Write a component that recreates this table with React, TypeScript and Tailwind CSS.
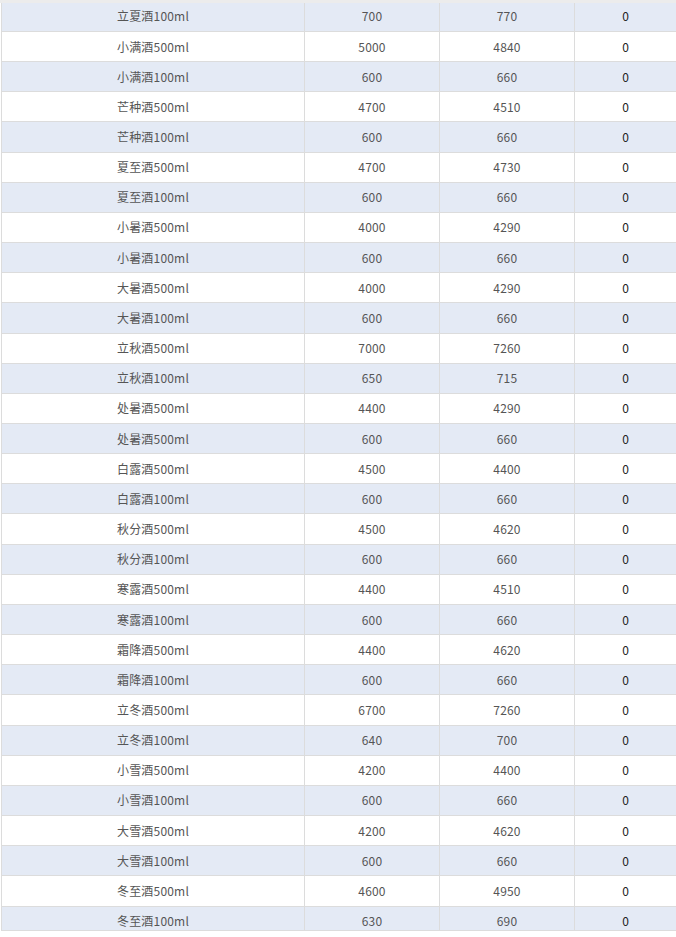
const rows: [string, number, number, number][] = [
  ['立夏酒100ml', 700, 770, 0],
  ['小满酒500ml', 5000, 4840, 0],
  ['小满酒100ml', 600, 660, 0],
  ['芒种酒500ml', 4700, 4510, 0],
  ['芒种酒100ml', 600, 660, 0],
  ['夏至酒500ml', 4700, 4730, 0],
  ['夏至酒100ml', 600, 660, 0],
  ['小暑酒500ml', 4000, 4290, 0],
  ['小暑酒100ml', 600, 660, 0],
  ['大暑酒500ml', 4000, 4290, 0],
  ['大暑酒100ml', 600, 660, 0],
  ['立秋酒500ml', 7000, 7260, 0],
  ['立秋酒100ml', 650, 715, 0],
  ['处暑酒500ml', 4400, 4290, 0],
  ['处暑酒500ml', 600, 660, 0],
  ['白露酒500ml', 4500, 4400, 0],
  ['白露酒100ml', 600, 660, 0],
  ['秋分酒500ml', 4500, 4620, 0],
  ['秋分酒100ml', 600, 660, 0],
  ['寒露酒500ml', 4400, 4510, 0],
  ['寒露酒100ml', 600, 660, 0],
  ['霜降酒500ml', 4400, 4620, 0],
  ['霜降酒100ml', 600, 660, 0],
  ['立冬酒500ml', 6700, 7260, 0],
  ['立冬酒100ml', 640, 700, 0],
  ['小雪酒500ml', 4200, 4400, 0],
  ['小雪酒100ml', 600, 660, 0],
  ['大雪酒500ml', 4200, 4620, 0],
  ['大雪酒100ml', 600, 660, 0],
  ['冬至酒500ml', 4600, 4950, 0],
  ['冬至酒100ml', 630, 690, 0],
]

export default function App() {
  return (
    <div
      className="w-[676px] h-[937px] bg-white overflow-hidden text-[12px]"
      style={{ fontFamily: '"Microsoft YaHei", "Noto Sans CJK SC", "Noto Sans", sans-serif' }}
    >
      <div className="h-[3px] bg-[#ececec]" />
      <div className="h-[928px] overflow-hidden border-l border-[#dcdcdc] ml-px border-b">
        <div className="-mt-[1.2px]">
          {rows.map(([name, a, b, c], i) => (
            <div
              key={i}
              className={`grid grid-cols-[303px_135px_135px_1fr] h-[30.17px] border-b border-[#dcdcdc] ${
                i % 2 === 0 ? 'bg-[#e4eaf5]' : 'bg-white'
              }`}
            >
              <div className="flex items-center justify-center border-r border-[#dcdcdc] text-[#555] tracking-[0.2px]">
                {name}
              </div>
              <div className="flex items-center justify-center border-r border-[#dcdcdc] text-[#555] tracking-[0.2px]">
                {a}
              </div>
              <div className="flex items-center justify-center border-r border-[#dcdcdc] text-[#555] tracking-[0.2px]">
                {b}
              </div>
              <div className="flex items-center justify-center text-[#222]">{c}</div>
            </div>
          ))}
        </div>
      </div>
    </div>
  )
}
